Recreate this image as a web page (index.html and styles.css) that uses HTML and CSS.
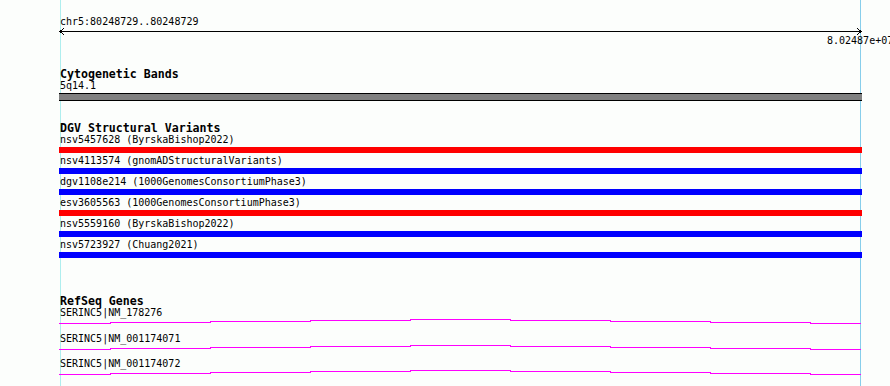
FILE: index.html
```html
<!DOCTYPE html>
<html lang="en">
<head>
  <meta charset="UTF-8">
  <meta name="viewport" content="width=device-width, initial-scale=1.0">
  <title>chr5:80248729..80248729</title>
  <link rel="stylesheet" href="styles.css">
</head>
<body>
  <div class="browser">
    <div class="guide guide-start"></div>
    <div class="guide guide-end"></div>

    <div class="ruler">
      <div class="feature-label">chr5:80248729..80248729</div>
      <svg class="ruler-axis" width="803" height="7" shape-rendering="crispEdges">
        <line x1="1" y1="3.5" x2="802" y2="3.5" stroke="#000" stroke-width="1"/>
        <polyline points="5,0 1,3.5 5,7" fill="none" stroke="#000" stroke-width="1"/>
        <polyline points="798,0 802,3.5 798,7" fill="none" stroke="#000" stroke-width="1"/>
      </svg>
      <div class="ruler-tick">8.02487e+07</div>
    </div>

    <div class="track">
      <div class="track-title">Cytogenetic Bands</div>
      <div class="feature-label">5q14.1</div>
      <div class="band"></div>
    </div>

    <div class="track track-dgv">
      <div class="track-title">DGV Structural Variants</div>
      <div class="variant">
        <div class="feature-label">nsv5457628 (ByrskaBishop2022)</div>
        <div class="variant-bar sv-loss"></div>
      </div>
      <div class="variant">
        <div class="feature-label">nsv4113574 (gnomADStructuralVariants)</div>
        <div class="variant-bar sv-gain"></div>
      </div>
      <div class="variant">
        <div class="feature-label">dgv1108e214 (1000GenomesConsortiumPhase3)</div>
        <div class="variant-bar sv-gain"></div>
      </div>
      <div class="variant">
        <div class="feature-label">esv3605563 (1000GenomesConsortiumPhase3)</div>
        <div class="variant-bar sv-loss"></div>
      </div>
      <div class="variant">
        <div class="feature-label">nsv5559160 (ByrskaBishop2022)</div>
        <div class="variant-bar sv-gain"></div>
      </div>
      <div class="variant">
        <div class="feature-label">nsv5723927 (Chuang2021)</div>
        <div class="variant-bar sv-gain"></div>
      </div>
    </div>

    <div class="track">
      <div class="track-title">RefSeq Genes</div>
      <div class="gene">
        <div class="feature-label">SERINC5|NM_178276</div>
        <svg class="gene-line" width="803" height="6" shape-rendering="crispEdges">
          <path d="M0 4.5H51V3.5H151V2.5H251V1.5H351V0.5H451V1.5H551V2.5H651V3.5H751V4.5H802" fill="none" stroke="#ff00ff" stroke-width="1"/>
        </svg>
      </div>
      <div class="gene">
        <div class="feature-label">SERINC5|NM_001174071</div>
        <svg class="gene-line" width="803" height="6" shape-rendering="crispEdges">
          <path d="M0 4.5H51V3.5H151V2.5H251V1.5H351V0.5H451V1.5H551V2.5H651V3.5H751V4.5H802" fill="none" stroke="#ff00ff" stroke-width="1"/>
        </svg>
      </div>
      <div class="gene">
        <div class="feature-label">SERINC5|NM_001174072</div>
        <svg class="gene-line" width="803" height="6" shape-rendering="crispEdges">
          <path d="M0 4.5H51V3.5H151V2.5H251V1.5H351V0.5H451V1.5H551V2.5H651V3.5H751V4.5H802" fill="none" stroke="#ff00ff" stroke-width="1"/>
        </svg>
      </div>
    </div>
  </div>
</body>
</html>
```

FILE: styles.css
```css
body {
  margin: 0;
  background-color: #fcfefc;
  font-family: "DejaVu Sans Mono", monospace;
  font-size: 10px;
  color: #000;
  overflow: hidden;
}

.browser {
  position: relative;
  width: 862px;
  height: 386px;
  padding: 16px 0 0 59px;
  box-sizing: border-box;
}

/* guide lines at the start and end of the view */
.guide {
  position: absolute;
  top: 0;
  bottom: 0;
  width: 1px;
  z-index: -1;
}

.guide-start {
  left: 60px;
  background-color: #aeeeee;
}

.guide-end {
  left: 860px;
  background-color: #87ceeb;
}

.feature-label {
  padding-left: 1px;
  line-height: 12px;
  white-space: nowrap;
}

.ruler-axis {
  display: block;
}

.ruler-tick {
  padding-left: 768px;
  line-height: 12px;
  white-space: nowrap;
}

.track {
  margin-top: 21px;
}

.track-dgv {
  padding-bottom: 14px;
}

.track-title {
  padding-left: 1px;
  font-size: 11.6px;
  font-weight: bold;
  line-height: 12px;
  white-space: nowrap;
}

.band {
  margin-top: 1px;
  height: 6px;
  background-color: #808080;
  border-top: 1px solid #000;
  border-bottom: 1px solid #000;
}

.variant {
  padding-bottom: 2px;
}

.variant-bar {
  margin-top: 1px;
  height: 6px;
}

.sv-loss {
  background-color: #ff0000;
}

.sv-gain {
  background-color: #0000ff;
}

.gene {
  padding-bottom: 7.5px;
}

.gene-line {
  display: block;
}
```
